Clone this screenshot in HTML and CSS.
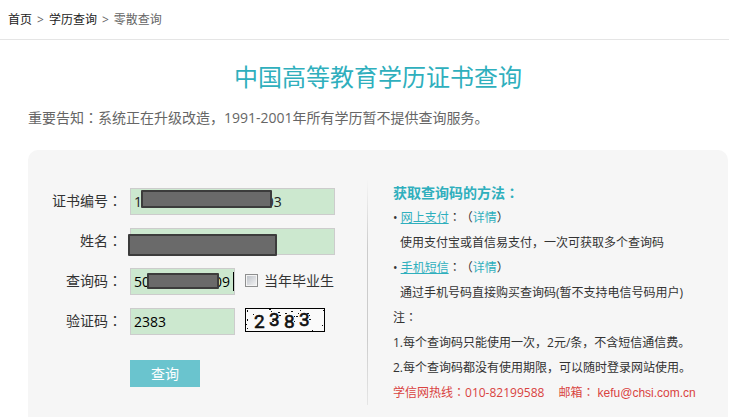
FILE: index.html
```html
<!DOCTYPE html>
<html lang="zh-CN">
<head>
<meta charset="utf-8">
<meta name="viewport" content="width=device-width, initial-scale=1">
<title>零散查询</title>
<link rel="stylesheet" href="styles.css">
</head>
<body>
<nav class="crumbs">
  <a href="#">首页</a><span>&gt;</span><a href="#">学历查询</a><span>&gt;</span><span>零散查询</span>
</nav>
<main class="main">
  <h1 class="title">中国高等教育学历证书查询</h1>
  <p class="notice">重要告知<span class="mid" lang="zh-TW">：</span>系统正在升级改造，1991-2001年所有学历暂不提供查询服务。</p>
  <div class="panel">
    <form class="form">
      <div class="row">
        <label class="label" for="cert">证书编号<span class="mid" lang="zh-TW">：</span></label>
        <div class="field">
          <input class="input" id="cert" type="text" value="1000000000000000 03">
          <span class="mask mask-cert"></span>
        </div>
      </div>
      <div class="row">
        <label class="label" for="name">姓名<span class="mid" lang="zh-TW">：</span></label>
        <div class="field">
          <input class="input" id="name" type="text">
          <span class="mask mask-name"></span>
        </div>
      </div>
      <div class="row">
        <label class="label" for="code">查询码<span class="mid" lang="zh-TW">：</span></label>
        <div class="field">
          <input class="input input-short" id="code" type="text" value="500000000009">
          <span class="mask mask-code"></span>
          <span class="caret"></span>
        </div>
        <input class="check" id="grad" type="checkbox">
        <label class="check-label" for="grad">当年毕业生</label>
      </div>
      <div class="row">
        <label class="label" for="captcha">验证码<span class="mid" lang="zh-TW">：</span></label>
        <div class="field">
          <input class="input input-short" id="captcha" type="text" value="2383">
        </div>
        <svg class="captcha" width="80" height="24" viewBox="0 0 80 24" role="img" aria-label="验证码">
          <rect x=".5" y=".5" width="79" height="23" fill="#fafafa" stroke="#000"/>
          <path d="M2 2h1v2h-1zM2 11h1v2h-1zM1 16h1v1h-1zM2 20h1v1h-1zM8 6h1v1h-1zM13 8h2v1h-2zM24 1h2v1h-2zM26 3h1v1h-1zM33 4h2v1h-2zM34 7h2v1h-2zM27 13h2v1h-2zM40 5h2v1h-2zM46 3h2v1h-2zM49 8h1v1h-1zM51 8h2v1h-2zM53 5h1v1h-1zM55 2h1v1h-1zM62 5h2v1h-2zM64 7h1v1h-1zM64 11h2v1h-2zM67 22h1v1h-1zM77 17h1v1h-1zM78 2h1v1h-1zM49 13h1v1h-1zM41 16h1v1h-1z" fill="#111"/>
          <g class="captcha-text">
            <text x="9" y="20">2</text><text x="24" y="18">3</text><text x="39" y="20">8</text><text x="54" y="18">3</text>
          </g>
        </svg>
      </div>
      <div class="row row-submit">
        <button class="submit" type="button">查询</button>
      </div>
    </form>
    <section class="help">
      <h2>获取查询码的方法<span class="mid" lang="zh-TW">：</span></h2>
      <p>• <a class="line" href="#">网上支付</a><span class="mid" lang="zh-TW">：</span><span class="paren">（</span><a href="#">详情</a><span class="paren">）</span></p>
      <p class="indent">使用支付宝或首信易支付，一次可获取多个查询码</p>
      <p>• <a class="line" href="#">手机短信</a><span class="mid" lang="zh-TW">：</span><span class="paren">（</span><a href="#">详情</a><span class="paren">）</span></p>
      <p class="indent">通过手机号码直接购买查询码(暂不支持电信号码用户)</p>
      <p>注<span class="mid" lang="zh-TW">：</span></p>
      <p>1.每个查询码只能使用一次，2元/条，不含短信通信费。</p>
      <p>2.每个查询码都没有使用期限，可以随时登录网站使用。</p>
      <div class="contact"><p>学信网热线<span class="mid" lang="zh-TW">：</span>010-82199588</p><p>邮箱<span class="mid" lang="zh-TW">：</span> <span class="mail">kefu@chsi.com.cn</span></p></div>
    </section>
  </div>
</main>
</body>
</html>
```
FILE: styles.css
```css
* { box-sizing: border-box; }

body {
  display: flex;
  flex-direction: column;
  min-height: 100vh;
  margin: 0;
  background: #fff;
  color: #333;
  font: 12px/25px "Open Sans", "Noto Sans CJK SC", sans-serif;
}

h1, h2, p { margin: 0; }
a { color: #2fafbd; text-decoration: none; }

/* Full-width colon centred in its cell */
.mid {
  font-family: "Noto Sans CJK TC", sans-serif;
  line-height: 1;
}
.paren { text-spacing-trim: space-all; }

.crumbs {
  display: flex;
  gap: 5px;
  height: 40px;
  padding: 7px 8px;
  border-bottom: 1px solid #e5e5e5;
  color: #666;
}
.crumbs a { color: #222; }

.main {
  display: flex;
  flex: 1;
  flex-direction: column;
  padding: 20px 1px 0 28px;
}
.title {
  color: #2fafbd;
  font-size: 24px;
  font-weight: 400;
  line-height: 34px;
  text-align: center;
}
.notice {
  margin: 11px 0 20px;
  color: #666;
  font-size: 14px;
}

.panel {
  display: flex;
  flex: 1;
  align-items: flex-start;
  padding: 30px 24px 12px;
  border-radius: 10px 10px 0 0;
  background: #f6f6f6;
}

.form {
  display: flex;
  flex: none;
  flex-direction: column;
  gap: 13px;
  width: 315px;
  padding-top: 8px;
  font-size: 14px;
}
.row { display: flex; height: 27px; }
.row-submit { margin-top: 12px; padding-left: 78px; }
.label {
  width: 70px;
  margin-right: 8px;
  text-align: right;
  white-space: nowrap;
}
.field { position: relative; }
.input {
  display: block;
  width: 205px;
  height: 27px;
  padding: 0 3px;
  border: 1px solid #ccc;
  border-radius: 0;
  background: #cce8cf;
  color: #222;
  font: inherit;
}
.input-short { width: 105px; padding-right: 0; color: #000; }

.mask {
  position: absolute;
  border: 2px solid #3c3c3c;
  border-radius: 1px;
  background: #6a6a6a;
}
.mask-cert { top: 2px; left: 11px; width: 131px; height: 18px; }
.mask-name { top: 6px; left: -2px; width: 149px; height: 22px; }
.mask-code { top: 5px; left: 17px; width: 72px; height: 16px; }
.caret {
  position: absolute;
  top: 4px;
  left: 103px;
  width: 1px;
  height: 19px;
  background: #000;
}

.check {
  appearance: none;
  width: 13px;
  height: 13px;
  margin: 6px 6px 0 10px;
  border: 1px solid #8e8f8f;
  background: linear-gradient(135deg, #b9bec5, #f6f6f6);
  box-shadow: inset 0 0 0 1px #f4f4f4;
}
.captcha { flex: none; margin-left: 10px; }
.captcha-text {
  fill: #111;
  stroke: #111;
  stroke-width: 0.6px;
  font: 19px Roboto, sans-serif;
}
.submit {
  width: 70px;
  height: 27px;
  padding: 0;
  border: 0;
  background: #6ac4ce;
  color: #fff;
  font: inherit;
}

.help {
  flex: 1;
  padding-left: 25px;
  border-left: 1px solid;
  border-image: linear-gradient(#f6f6f6, #ccc 30%, #ccc 70%, #e6e6e6) 1;
  white-space: nowrap;
}
.help h2 {
  color: #2fafbd;
  font-size: 14px;
  line-height: 25px;
}
.help .line { text-decoration: underline; }
.indent { padding-left: 7px; }
.contact {
  display: flex;
  gap: 14px;
  color: #d9433f;
}
.mail {
  font-family: "Liberation Sans", sans-serif;
  line-height: 1;
}
```
